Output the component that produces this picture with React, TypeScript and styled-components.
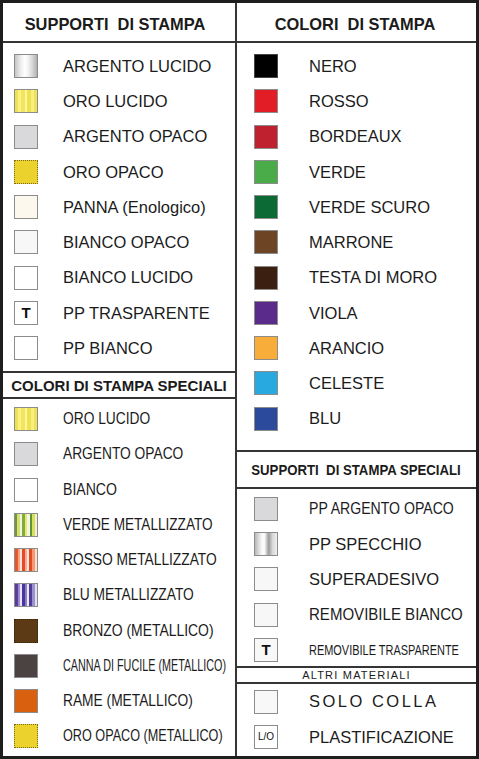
import styled, { createGlobalStyle } from "styled-components";

const GlobalStyle = createGlobalStyle`
  *, *::before, *::after { box-sizing: border-box; }
  body {
    margin: 0;
    background: #fff;
    font-family: "Liberation Sans", Arial, Helvetica, sans-serif;
    color: #1b1b1b;
  }
`;

const LINE = "2px solid #353535";

const Board = styled.div`
  width: 479px;
  height: 759px;
  border: 3px solid #1e1e1e;
  display: grid;
  grid-template-columns: 234px minmax(0, 1fr);
  background: #fff;
  overflow: hidden;
`;

const Column = styled.div<{ $divider?: boolean }>`
  min-width: 0;
  display: flex;
  flex-direction: column;
  border-right: ${(p) => (p.$divider ? LINE : "none")};
`;

const Heading = styled.div<{ $h: number; $top?: boolean; $padTop?: number; $shift?: number }>`
  flex: none;
  height: ${(p) => p.$h}px;
  padding-top: ${(p) => p.$padTop ?? 0}px;
  padding-right: ${(p) => p.$shift ?? 0}px;
  display: flex;
  align-items: center;
  justify-content: center;
  border-top: ${(p) => (p.$top ? LINE : "none")};
  border-bottom: ${LINE};
`;

const HeadText = styled.span<{ $size: number; $stretch?: number; $spacing?: number; $bold?: boolean }>`
  flex: none;
  display: inline-block;
  white-space: pre;
  font-size: ${(p) => p.$size}px;
  font-weight: ${(p) => (p.$bold === false ? "normal" : "bold")};
  letter-spacing: ${(p) => p.$spacing ?? 0}px;
  transform: scaleX(${(p) => p.$stretch ?? 1});
  line-height: 1;
`;

const List = styled.div<{ $h: number; $padTop: number }>`
  flex: none;
  height: ${(p) => p.$h}px;
  padding-top: ${(p) => p.$padTop}px;
  display: flex;
  flex-direction: column;
`;

const Row = styled.div<{ $indent: number; $gap: number }>`
  flex: none;
  height: 35.25px;
  display: flex;
  align-items: center;
  padding-left: ${(p) => p.$indent}px;
  gap: ${(p) => p.$gap}px;
`;

const Swatch = styled.span<{ $bg: string; $edge?: string }>`
  flex: none;
  width: 24px;
  height: 24px;
  background: ${(p) => p.$bg};
  border: 1px ${(p) => p.$edge ?? "solid #8c8c8c"};
  display: flex;
  align-items: center;
  justify-content: center;
  color: #111;
  line-height: 1;
`;

const Mark = styled.span<{ $size: number; $bold?: boolean }>`
  font-size: ${(p) => p.$size}px;
  font-weight: ${(p) => (p.$bold ? "bold" : "normal")};
`;

const Label = styled.span<{ $stretch?: number; $size?: number; $spacing?: number }>`
  display: inline-block;
  white-space: pre;
  font-size: ${(p) => p.$size ?? 16.5}px;
  letter-spacing: ${(p) => p.$spacing ?? 0}px;
  transform: scaleX(${(p) => p.$stretch ?? 1});
  transform-origin: left center;
  line-height: 1;
`;

const silver =
  "linear-gradient(90deg, #c4c4c4 0%, #ececec 25%, #ffffff 45%, #f2f2f2 60%, #d4d4d4 80%, #b0b0b0 100%)";
const mirror =
  "linear-gradient(90deg, #b8b8b8 0%, #f6f6f6 30%, #ffffff 42%, #9c9c9c 62%, #d8d8d8 80%, #efefef 100%)";
const goldShine =
  "linear-gradient(90deg, #f0e24e 0 14%, #f8f08a 14% 26%, #f2e55a 26% 44%, #fbf5a4 44% 56%, #f0e24e 56% 72%, #f7ee88 72% 86%, #f0e255 86%)";
const greenMet =
  "linear-gradient(90deg, #6b9a3a 0 10%, #d6e070 10% 22%, #f2f2e2 22% 34%, #7fae3c 34% 44%, #e8e86a 44% 54%, #f4f4ea 54% 66%, #5f9634 66% 78%, #d9de5c 78% 90%, #eef0e0 90%)";
const redMet =
  "linear-gradient(90deg, #e4582a 0 12%, #f7a47e 12% 22%, #fde3d6 22% 32%, #e5482a 32% 44%, #f8b08a 44% 54%, #fbe6da 54% 64%, #e24a22 64% 78%, #f59a72 78% 90%, #fde0d0 90%)";
const blueMet =
  "linear-gradient(90deg, #5a3c9c 0 12%, #9a8ad0 12% 22%, #e6e4f2 22% 32%, #4a35a0 32% 44%, #8c7ec6 44% 54%, #ecebf4 54% 64%, #503a9a 64% 78%, #9d92d0 78% 90%, #e2e0f0 90%)";

type Item = {
  label: string;
  bg: string;
  edge?: string;
  mark?: "T" | "L/O";
  stretch?: number;
  size?: number;
  spacing?: number;
};

const supporti: Item[] = [
  { label: "ARGENTO LUCIDO", bg: silver },
  { label: "ORO LUCIDO", bg: goldShine },
  { label: "ARGENTO OPACO", bg: "#d9d9db" },
  { label: "ORO OPACO", bg: "#ecd22c", edge: "dotted #7a6a20" },
  { label: "PANNA (Enologico)", bg: "#fdf8ee" },
  { label: "BIANCO OPACO", bg: "#f7f7f7" },
  { label: "BIANCO LUCIDO", bg: "#ffffff" },
  { label: "PP TRASPARENTE", bg: "#ffffff", mark: "T" },
  { label: "PP BIANCO", bg: "#ffffff" },
];

const speciali: Item[] = [
  { label: "ORO LUCIDO", bg: goldShine, size: 16, stretch: 0.86 },
  { label: "ARGENTO OPACO", bg: "#d9d9db", size: 16, stretch: 0.86 },
  { label: "BIANCO", bg: "#ffffff", size: 16, stretch: 0.88 },
  { label: "VERDE METALLIZZATO", bg: greenMet, size: 16, stretch: 0.85 },
  { label: "ROSSO METALLIZZATO", bg: redMet, size: 16, stretch: 0.86 },
  { label: "BLU METALLIZZATO", bg: blueMet, size: 16, stretch: 0.86 },
  { label: "BRONZO (METALLICO)", bg: "#5c3a16", edge: "dotted #3a2408", size: 16, stretch: 0.87 },
  { label: "CANNA DI FUCILE (METALLICO)", bg: "#4b4341", size: 16, stretch: 0.675 },
  { label: "RAME (METALLICO)", bg: "#d9600f", size: 16, stretch: 0.86 },
  { label: "ORO OPACO (METALLICO)", bg: "#ecd22c", edge: "dotted #7a6a20", size: 16, stretch: 0.79 },
];

const colori: Item[] = [
  { label: "NERO", bg: "#000000", edge: "solid #444" },
  { label: "ROSSO", bg: "#e21d25" },
  { label: "BORDEAUX", bg: "#c0212f" },
  { label: "VERDE", bg: "#4aab49" },
  { label: "VERDE SCURO", bg: "#0c6b35" },
  { label: "MARRONE", bg: "#6d4524" },
  { label: "TESTA DI MORO", bg: "#3b2011" },
  { label: "VIOLA", bg: "#5b2b8b" },
  { label: "ARANCIO", bg: "#f8ac3a" },
  { label: "CELESTE", bg: "#28aae1" },
  { label: "BLU", bg: "#2b4a9b" },
];

const supportiSpeciali: Item[] = [
  { label: "PP ARGENTO OPACO", bg: "#d9d9db", size: 16, stretch: 0.88 },
  { label: "PP SPECCHIO", bg: mirror },
  { label: "SUPERADESIVO", bg: "#f7f7f7" },
  { label: "REMOVIBILE BIANCO", bg: "#f7f7f7", size: 16, stretch: 0.94 },
  { label: "REMOVIBILE TRASPARENTE", bg: "#f8f8f8", mark: "T", size: 15, stretch: 0.73 },
];

const altri: Item[] = [
  { label: "SOLO COLLA", bg: "#f8f8f8", spacing: 2.5 },
  { label: "PLASTIFICAZIONE", bg: "#ffffff", mark: "L/O" },
];

function Entries({ items, indent, gap }: { items: Item[]; indent: number; gap: number }) {
  return (
    <>
      {items.map((it) => (
        <Row key={it.label} $indent={indent} $gap={gap}>
          <Swatch $bg={it.bg} $edge={it.edge}>
            {it.mark === "T" && <Mark $size={15} $bold>T</Mark>}
            {it.mark === "L/O" && <Mark $size={10}>L/O</Mark>}
          </Swatch>
          <Label $stretch={it.stretch} $size={it.size} $spacing={it.spacing}>
            {it.label}
          </Label>
        </Row>
      ))}
    </>
  );
}

export default function App() {
  return (
    <>
      <GlobalStyle />
      <Board>
        <Column $divider>
          <Heading $h={40} $padTop={4} $shift={8}>
            <HeadText $size={16.4}>SUPPORTI  DI STAMPA</HeadText>
          </Heading>
          <List $h={328} $padTop={5.5}>
            <Entries items={supporti} indent={11} gap={25} />
          </List>
          <Heading $h={28} $top>
            <HeadText $size={15}>COLORI DI STAMPA SPECIALI</HeadText>
          </Heading>
          <List $h={357} $padTop={2.4}>
            <Entries items={speciali} indent={11} gap={25} />
          </List>
        </Column>
        <Column>
          <Heading $h={40} $padTop={4} $shift={3}>
            <HeadText $size={16.4}>COLORI  DI STAMPA</HeadText>
          </Heading>
          <List $h={407} $padTop={5.4}>
            <Entries items={colori} indent={17} gap={31} />
          </List>
          <Heading $h={39} $top>
            <HeadText $size={15} $stretch={0.88}>SUPPORTI  DI STAMPA SPECIALI</HeadText>
          </Heading>
          <List $h={177} $padTop={2.2}>
            <Entries items={supportiSpeciali} indent={17} gap={31} />
          </List>
          <Heading $h={18} $top>
            <HeadText $size={11} $spacing={1.2} $bold={false}>ALTRI MATERIALI</HeadText>
          </Heading>
          <List $h={72} $padTop={0}>
            <Entries items={altri} indent={17} gap={31} />
          </List>
        </Column>
      </Board>
    </>
  );
}
